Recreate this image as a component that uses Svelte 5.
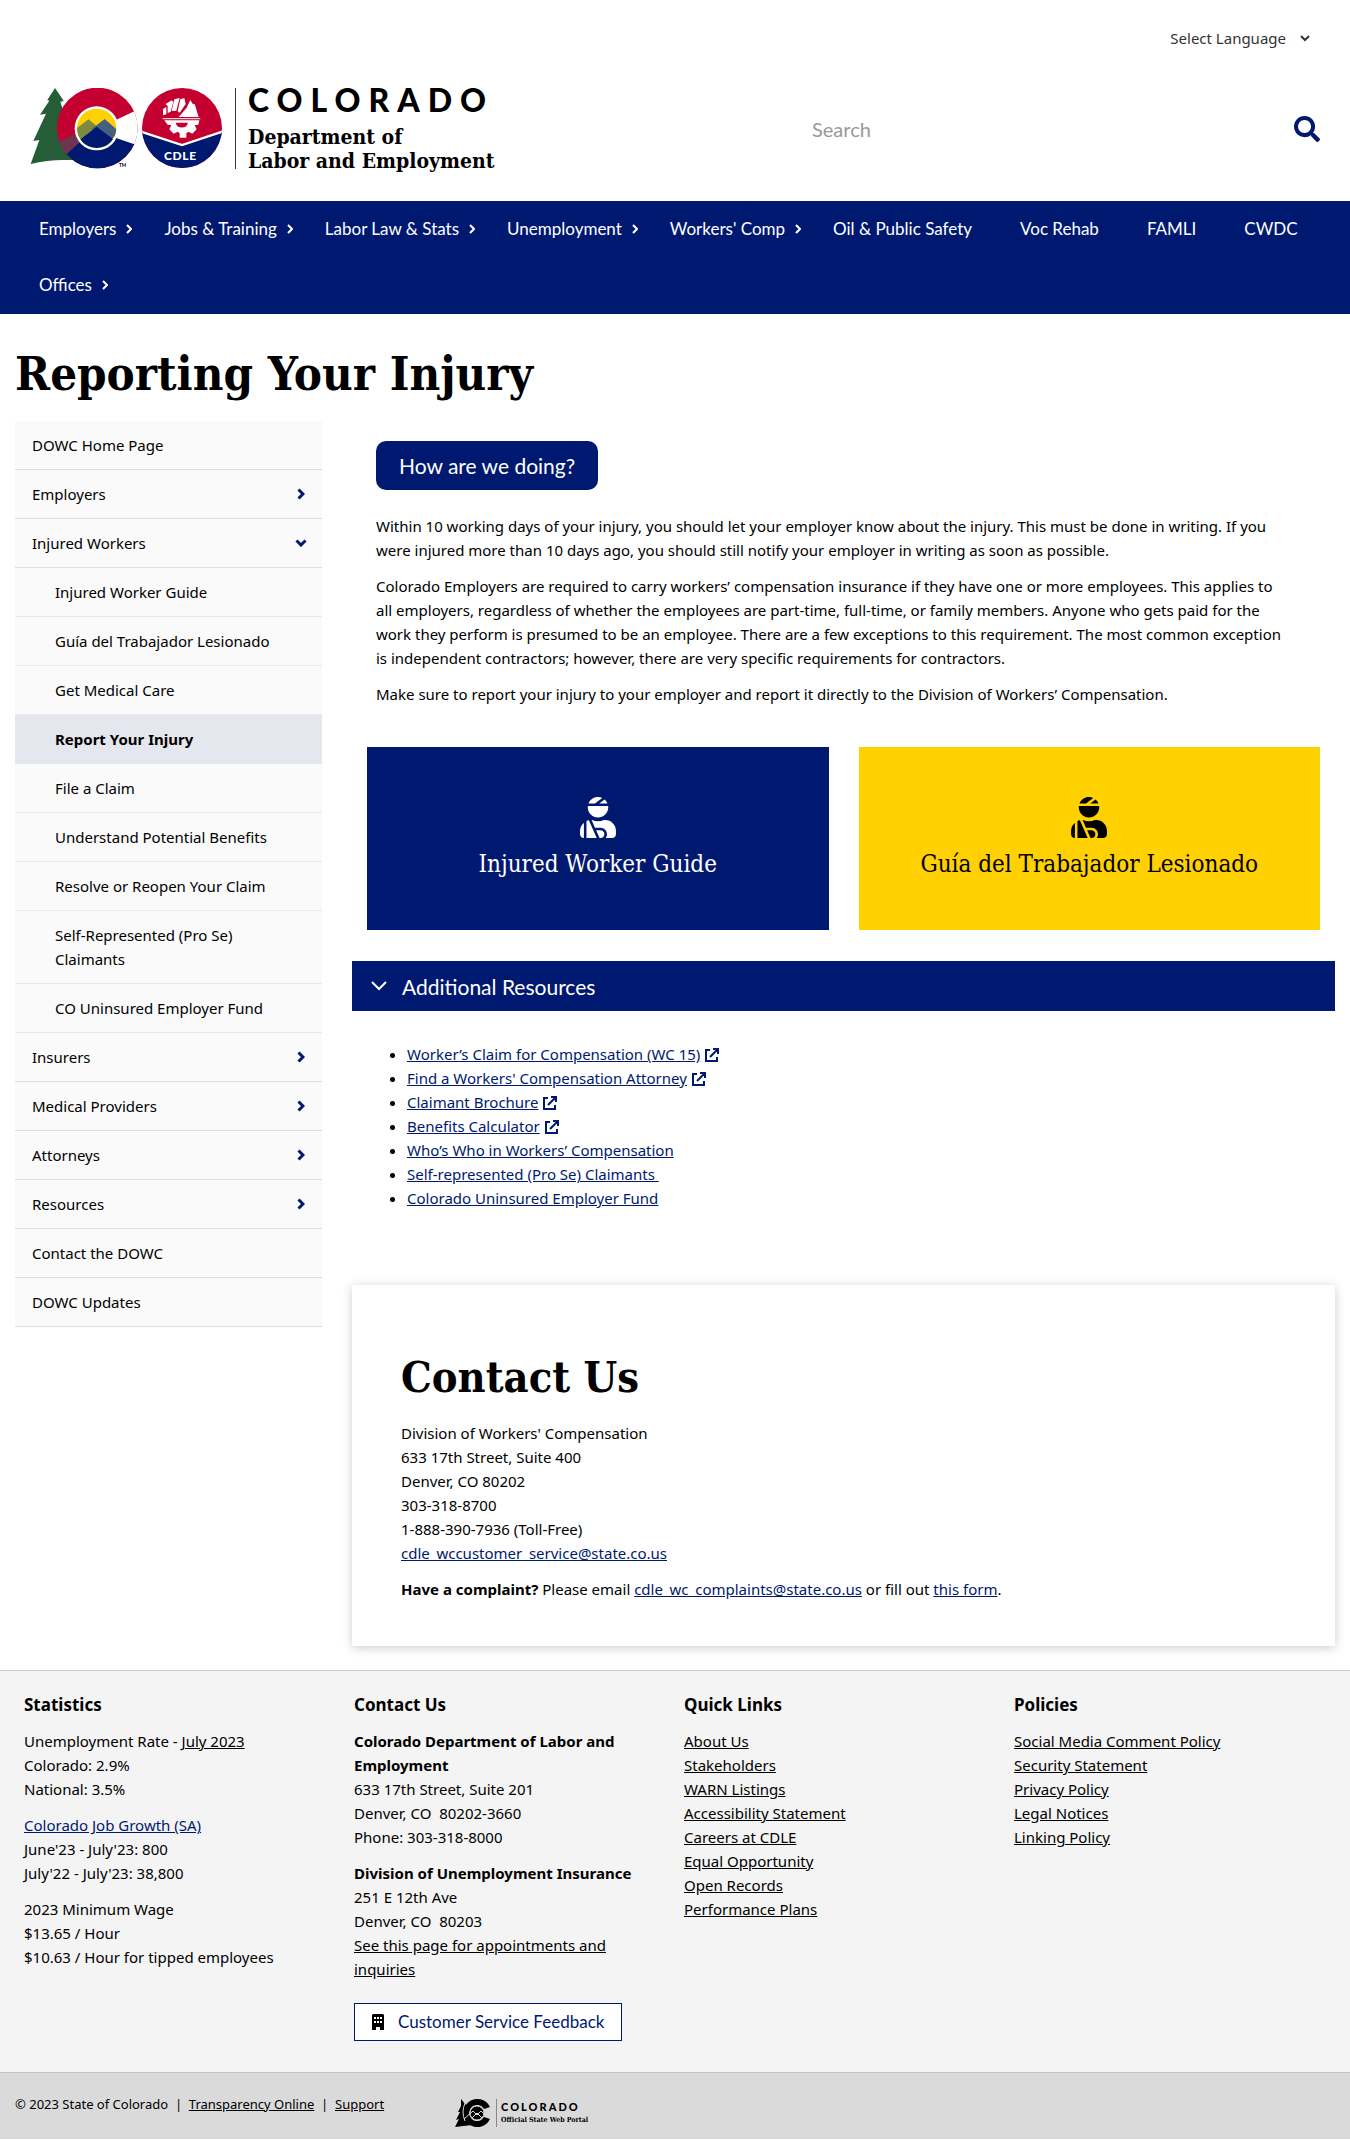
<script>
  const nav = [
    { label: 'Employers', menu: true },
    { label: 'Jobs & Training', menu: true },
    { label: 'Labor Law & Stats', menu: true },
    { label: 'Unemployment', menu: true },
    { label: "Workers' Comp", menu: true },
    { label: 'Oil & Public Safety' },
    { label: 'Voc Rehab' },
    { label: 'FAMLI' },
    { label: 'CWDC' },
    { label: 'Offices', menu: true }
  ];

  const side = [
    { label: 'DOWC Home Page' },
    { label: 'Employers', icon: 'right' },
    {
      label: 'Injured Workers',
      icon: 'down',
      children: [
        'Injured Worker Guide',
        'Guía del Trabajador Lesionado',
        'Get Medical Care',
        'Report Your Injury',
        'File a Claim',
        'Understand Potential Benefits',
        'Resolve or Reopen Your Claim',
        'Self-Represented (Pro Se) Claimants',
        'CO Uninsured Employer Fund'
      ]
    },
    { label: 'Insurers', icon: 'right' },
    { label: 'Medical Providers', icon: 'right' },
    { label: 'Attorneys', icon: 'right' },
    { label: 'Resources', icon: 'right' },
    { label: 'Contact the DOWC' },
    { label: 'DOWC Updates' }
  ];
  const current = 'Report Your Injury';

  const resources = [
    { label: 'Worker’s Claim for Compensation (WC 15)', ext: true },
    { label: "Find a Workers' Compensation Attorney", ext: true },
    { label: 'Claimant Brochure', ext: true },
    { label: 'Benefits Calculator', ext: true },
    { label: 'Who’s Who in Workers’ Compensation' },
    { label: 'Self-represented (Pro Se) Claimants\u00a0' },
    { label: 'Colorado Uninsured Employer Fund' }
  ];

  const quick = ['About Us', 'Stakeholders', 'WARN Listings', 'Accessibility Statement', 'Careers at CDLE', 'Equal Opportunity', 'Open Records', 'Performance Plans'];
  const policies = ['Social Media Comment Policy', 'Security Statement', 'Privacy Policy', 'Legal Notices', 'Linking Policy'];

  let open = $state(true);
</script>

{#snippet person()}
  <svg class="person" viewBox="0 0 448 512" aria-hidden="true">
    <path d="M277.37 11.98C261.08 4.47 243.11 0 224 0c-53.69 0-99.5 33.13-118.51 80h81.19l90.69-68.02zM342.51 80c-7.9-19.47-20.67-36.2-36.49-49.52L239.99 80h102.52zM224 256c70.69 0 128-57.31 128-128 0-5.48-.95-10.7-1.61-16H97.61c-.67 5.3-1.61 10.52-1.61 16 0 70.69 57.31 128 128 128zM80 299.7V512h128.26l-98.45-221.52A132.835 132.835 0 0 0 80 299.7zM0 464c0 26.51 21.49 48 48 48V320.24C18.88 344.89 0 381.26 0 422.4V464zm256-48h-55.38l42.67 96H256c26.47 0 48-21.53 48-48s-21.53-48-48-48zm57.6-128h-16.71c-22.24 10.18-46.88 16-72.89 16s-50.65-5.82-72.89-16h-7.37l42.67 96H256c44.11 0 80 35.89 80 80 0 18.08-6.26 34.59-16.41 48H400c26.51 0 48-21.49 48-48v-41.6c0-74.23-60.17-134.4-134.4-134.4z" />
  </svg>
{/snippet}

<header>
  <div class="language">
    <button type="button">
      Select Language
      <svg width="10" height="7" viewBox="0 0 10 7" aria-hidden="true"><path d="M1 1l4 4 4-4" fill="none" stroke="currentColor" stroke-width="2" /></svg>
    </button>
  </div>
  <div class="masthead">
    <a class="brand" href="#home" aria-label="Colorado Department of Labor and Employment">
      <svg class="marks" viewBox="90 84 579 243" aria-hidden="true">
        <defs>
          <clipPath id="ring"><circle cx="292" cy="204" r="121" /></clipPath>
          <clipPath id="sun"><circle cx="290" cy="205" r="59" /></clipPath>
          <clipPath id="badge"><circle cx="546" cy="204" r="120" /></clipPath>
        </defs>
        <path fill="#245d38" d="M165 84l26 38-10 4 60 176c-60-4-100-2-149 10l26-72-18 3 38-82-18 3 28-42-6-2z" />
        <g clip-path="url(#ring)">
          <rect x="170" y="80" width="250" height="250" fill="#c3002f" />
          <path fill="#001970" d="M170 300l70-66 60-30 130 60v80H170z" />
          <path fill="#6f3550" d="M165 255l15-12 60-28 10 22-52 47-33 20z" />
          <path fill="#fff" d="M425 143l-79 38v52l79 27z" />
        </g>
        <circle cx="290" cy="205" r="66" fill="#fff" />
        <g clip-path="url(#sun)">
          <rect x="230" y="145" width="120" height="120" fill="#ffd100" />
          <path fill="#7d8a3f" d="M220 212l46-34 35 30-50 50z" />
          <path fill="#44607f" d="M276 206l38-29 44 38-40 40z" />
          <path fill="#001970" d="M226 250l64-50 66 50v30H226z" />
        </g>
        <text x="357" y="321" class="tm">TM</text>
        <g clip-path="url(#badge)">
          <rect x="426" y="84" width="240" height="240" fill="#c3002f" />
          <path fill="#001970" d="M420 215l126 42 126-44v120H420z" />
          <path fill="none" stroke="#fff" stroke-width="7" d="M420 214l126 41 126-42" />
        </g>
        <g fill="#fff">
          <path d="M489 147l10-6v22l-10 3zM497 132l18-11 5 5-8 29-9 4v-21zM523 118l16-4-10 38-14 1zM541 118l12-4 4 18-18 26-6-4zM560 143l11-23 8 13 5-1 12 39H536z" />
          <path d="M488 174h113v4H488z" opacity=".8" />
          <path d="M493 181h105l-3 13-11 2 6 12-13 13-12-6-6 5v13h-20v-13l-6-5-12 6-13-13 6-12-11-2z" />
        </g>
        <path fill="#c3002f" d="M527 188h37a19 19 0 0 1-37 0z" />
        <text x="492" y="301" class="cdle">CDLE</text>
      </svg>
      <span class="rule"></span>
      <span class="words">
        <span class="state">COLORADO</span>
        <span class="dept">Department of<br />Labor and Employment</span>
      </span>
    </a>
    <form class="search" onsubmit={(e) => e.preventDefault()}>
      <input type="search" placeholder="Search" aria-label="Search" />
      <button type="submit" aria-label="Submit search">
        <svg width="26" height="26" viewBox="0 0 512 512" aria-hidden="true"><path fill="#001970" d="M505 442.700L405.300 343c-4.500-4.500-10.600-7-17-7H372c27.600-35.300 44-79.700 44-128C416 93.100 322.900 0 208 0S0 93.100 0 208s93.100 208 208 208c48.300 0 92.700-16.400 128-44v16.300c0 6.400 2.500 12.500 7 17l99.700 99.700c9.400 9.400 24.600 9.400 33.900 0l28.300-28.300c9.400-9.400 9.400-24.600.1-34zM208 336c-70.700 0-128-57.200-128-128 0-70.700 57.200-128 128-128 70.700 0 128 57.200 128 128 0 70.700-57.200 128-128 128z" /></svg>
      </button>
    </form>
  </div>
</header>

<nav class="main-nav" aria-label="Main">
  {#each nav as item}
    <a href="#nav">
      {item.label}
      {#if item.menu}
        <svg width="6" height="10" viewBox="0 0 6 10" aria-hidden="true"><path d="M1 1l4 4-4 4" fill="none" stroke="currentColor" stroke-width="2" /></svg>
      {/if}
    </a>
  {/each}
</nav>

<main>
  <h1>Reporting Your Injury</h1>
  <div class="columns">
    <nav class="side" aria-label="Section">
      <ul>
        {#each side as item}
          <li>
            <a href="#side">
              {item.label}
              {#if item.icon}
                <svg class={item.icon} width="8" height="12" viewBox="0 0 8 12" aria-hidden="true"><path d="M1.500 1.500L6 6l-4.500 4.500" fill="none" stroke="#001970" stroke-width="3" /></svg>
              {/if}
            </a>
            {#if item.children}
              <ul class="sub">
                {#each item.children as child}
                  <li><a href="#side" class:current={child === current}>{child}</a></li>
                {/each}
              </ul>
            {/if}
          </li>
        {/each}
      </ul>
    </nav>

    <div class="content">
      <section class="intro">
        <a class="survey" href="#survey">How are we doing?</a>
        <p>Within 10 working days of your injury, you should let your employer know about the injury. This must be done in writing. If you were injured more than 10 days ago, you should still notify your employer in writing as soon as possible.</p>
        <p>Colorado Employers are required to carry workers’ compensation insurance if they have one or more employees. This applies to all employers, regardless of whether the employees are part-time, full-time, or family members. Anyone who gets paid for the work they perform is presumed to be an employee. There are a few exceptions to this requirement. The most common exception is independent contractors; however, there are very specific requirements for contractors.</p>
        <p>Make sure to report your injury to your employer and report it directly to the Division of Workers’ Compensation.</p>
      </section>

      <div class="guides">
        <a class="guide navy" href="#guide">{@render person()}<span>Injured Worker Guide</span></a>
        <a class="guide gold" href="#guia">{@render person()}<span>Guía del Trabajador Lesionado</span></a>
      </div>

      <section class="resources">
        <button type="button" aria-expanded={open} onclick={() => (open = !open)}>
          <svg width="16" height="10" viewBox="0 0 16 10" aria-hidden="true"><path d="M1 1l7 7 7-7" fill="none" stroke="currentColor" stroke-width="2" /></svg>
          Additional Resources
        </button>
        {#if open}
          <ul>
            {#each resources as r}
              <li>
                <a href="#resource">{r.label}</a>{#if r.ext}<svg class="ext" width="14" height="14" viewBox="0 0 14 14" aria-hidden="true"><path d="M5 2H1v11h11V9M8 1h5v5M13 1L5 9" fill="none" stroke="#001970" stroke-width="2" /></svg>{/if}
              </li>
            {/each}
          </ul>
        {/if}
      </section>

      <section class="contact">
        <h2>Contact Us</h2>
        <p>
          Division of Workers' Compensation<br />633 17th Street, Suite 400<br />Denver, CO 80202<br />303-318-8700<br />1-888-390-7936 (Toll-Free)<br />
          <a href="#mail">cdle_wccustomer_service@state.co.us</a>
        </p>
        <p><strong>Have a complaint?</strong> Please email <a href="#mail">cdle_wc_complaints@state.co.us</a> or fill out <a href="#form">this form</a>.</p>
      </section>
    </div>
  </div>
</main>

<footer>
  <div class="links">
    <section>
      <h3>Statistics</h3>
      <p>Unemployment Rate - <a href="#rate">July 2023</a><br />Colorado: 2.9%<br />National: 3.5%</p>
      <p><a class="blue" href="#growth">Colorado Job Growth (SA)</a><br />June'23 - July'23: 800<br />July'22 - July'23: 38,800</p>
      <p>2023 Minimum Wage<br />$13.65 / Hour<br />$10.63 / Hour for tipped employees</p>
    </section>
    <section>
      <h3>Contact Us</h3>
      <p><strong>Colorado Department of Labor and Employment</strong><br />633 17th Street, Suite 201<br />Denver, CO&nbsp; 80202-3660<br />Phone: 303-318-8000</p>
      <p><strong>Division of Unemployment Insurance</strong><br />251 E 12th Ave<br />Denver, CO&nbsp; 80203<br /><a href="#appointments">See this page for appointments and inquiries</a></p>
      <a class="feedback" href="#feedback">
        <svg width="12" height="16" viewBox="0 0 12 16" aria-hidden="true"><path fill="#000" fill-rule="evenodd" d="M1 0h10l1 1v15H8v-3H4v3H0V1zM2 3v2h2V3zm3 0v2h2V3zm3 0v2h2V3zM2 7v2h2V7zm3 0v2h2V7zm3 0v2h2V7z" /></svg>
        Customer Service Feedback
      </a>
    </section>
    <section>
      <h3>Quick Links</h3>
      <ul>{#each quick as q}<li><a href="#quick">{q}</a></li>{/each}</ul>
    </section>
    <section>
      <h3>Policies</h3>
      <ul>{#each policies as q}<li><a href="#policy">{q}</a></li>{/each}</ul>
    </section>
  </div>
  <div class="legal">
    <p>© 2023 State of Colorado&nbsp; |&nbsp; <a href="#top">Transparency Online</a>&nbsp; |&nbsp; <a href="#support">Support</a></p>
    <a class="portal" href="#portal">
      <svg width="36" height="28" viewBox="0 0 36 28" aria-hidden="true">
        <path d="M6 0l5 6 6 20-17 2 4-8-3 1 4-8-2 0 3-6z" />
        <path d="M35 8A14 14 0 1 0 35 20l-6-2a8 8 0 1 1 0-8z" />
        <circle cx="22" cy="14" r="7" />
        <g fill="none" stroke="#dadada"><circle cx="22" cy="14" r="7" /><path d="M9 20l9-8 4 4 4-4 3 3M17 19l5-5 5 5M10 4q-4 9 0 18" /></g>
      </svg>
      <span class="portal-words"><b>COLORADO</b><span>Official State Web Portal</span></span>
    </a>
  </div>
</footer>

<style>
  :global(body) {
    margin: 0;
    background: #fff;
    color: #000;
    font: 15px/24px "Noto Sans", sans-serif;
  }
  a { color: #001970; }
  p { margin: 0 0 12px; }
  ul { margin: 0; padding: 0; list-style: none; }
  button { font: inherit; border: 0; background: none; cursor: pointer; }

  .language { display: flex; justify-content: flex-end; padding: 26px 40px 0; }
  .language button { display: flex; align-items: center; gap: 14px; padding: 0; color: #333; }
  .masthead { display: flex; justify-content: space-between; align-items: flex-start; padding: 38px 30px 28px; }
  .brand { display: flex; align-items: flex-start; color: #000; text-decoration: none; }
  .marks { width: 193px; height: 81px; }
  .tm { font: 700 14px Lato, sans-serif; }
  .cdle { font: 900 36px Lato, sans-serif; fill: #fff; letter-spacing: 2px; }
  .rule { width: 1px; height: 81px; margin: 0 12px; background: #333; }
  .words { display: flex; flex-direction: column; gap: 13px; }
  .state { font: 900 32px/24px Lato, sans-serif; letter-spacing: 8px; }
  .dept { font: 700 21px/24px "DejaVu Serif Condensed", "DejaVu Serif", serif; }
  .search { display: flex; align-items: center; width: 510px; height: 82px; }
  .search input { flex: 1; min-width: 0; padding: 0 2px; border: 0; outline: 0; font: 20px/24px Lato, sans-serif; }
  .search input::placeholder { color: #999; opacity: 1; }
  .search button { display: flex; padding: 0; }

  .main-nav { display: flex; flex-wrap: wrap; padding: 0 15px 1px; background: #001970; }
  .main-nav a { display: flex; align-items: center; height: 56px; padding: 0 24px; color: #fff; text-decoration: none; font: 17px/24px Lato, sans-serif; }
  .main-nav svg { margin: 0 -16px 0 10px; }

  main { padding: 36px 15px 24px; }
  h1, h2 { margin: 0; font: 700 43px/48px "DejaVu Serif Condensed", "DejaVu Serif", serif; }
  h1 { font-size: 47px; }
  .columns { display: flex; align-items: flex-start; gap: 30px; padding-top: 23px; }
  .side { flex: 0 0 307px; }
  .side a { display: flex; justify-content: space-between; align-items: center; padding: 12px 17px; border-bottom: 1px solid #ddd; background: #fafafa; color: #000; text-decoration: none; }
  .side .sub a { padding-left: 40px; padding-right: 40px; border-color: #e8e8e8; }
  .side .sub .current { background: #e4e7ee; font-weight: 700; }
  .side .down { transform: rotate(90deg); }

  .content { flex: 1; min-width: 0; }
  .intro { padding: 20px 48px 0 24px; }
  .survey { display: inline-block; margin-bottom: 24px; padding: 12px 23px; border-radius: 10px; background: #001970; color: #fff; font: 21px/25px Lato, sans-serif; text-decoration: none; }
  .guides { display: grid; grid-template-columns: 1fr 1fr; gap: 30px; padding: 29px 15px 31px; }
  .guide { display: flex; flex-direction: column; align-items: center; gap: 10px; padding: 50px 15px; font: 24px/32px "DejaVu Serif Condensed", "DejaVu Serif", serif; text-decoration: none; }
  .navy { background: #001970; color: #fff; fill: #fff; }
  .gold { background: #ffd100; color: #000; }
  .person { width: 36px; height: 41px; }
  .resources button { display: flex; align-items: center; gap: 15px; width: 100%; height: 50px; padding: 0 19px; background: #001970; color: #fff; font: 21px/25px Lato, sans-serif; }
  .resources ul { padding: 31px 0 75px 55px; list-style: disc; }
  .ext { margin-left: 5px; vertical-align: -2px; }
  .contact { padding: 68px 49px 33px; box-shadow: 0 2px 10px rgba(0, 0, 0, 0.2); }
  .contact h2 { margin-bottom: 20px; }

  .links { display: grid; grid-template-columns: repeat(4, 1fr); padding: 22px 6px 31px 24px; border-top: 1px solid #ccc; background: #f4f4f4; }
  .links section { padding-right: 40px; }
  footer a { color: #000; }
  footer .blue, footer .feedback { color: #001970; }
  h3 { margin: 0 0 12px; font-size: 17px; font-weight: 700; line-height: 24px; }
  .feedback { display: inline-flex; align-items: center; gap: 14px; margin-top: 10px; padding: 6px 17px; border: 1px solid #001970; background: #fff; font: 17px/24px Lato, sans-serif; text-decoration: none; }
  .legal { display: flex; gap: 71px; padding: 19px 15px 12px; border-top: 1px solid #c4c4c4; background: #dadada; font-size: 13px; }
  .legal p { margin: 0; }
  .portal { display: flex; gap: 5px; padding-top: 7px; text-decoration: none; }
  .portal-words { display: flex; flex-direction: column; padding-left: 4px; border-left: 1px solid #888; }
  .portal-words b { font: 900 11px/16px Lato, sans-serif; letter-spacing: 2px; }
  .portal-words span { font: 700 7px/10px "DejaVu Serif Condensed", "DejaVu Serif", serif; }
</style>
